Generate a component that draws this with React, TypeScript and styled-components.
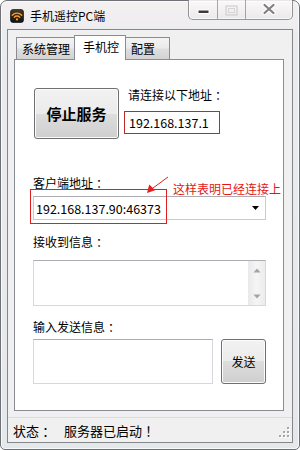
import React from "react";
import styled, { createGlobalStyle } from "styled-components";

const GlobalStyle = createGlobalStyle`
  html, body {
    margin: 0;
    padding: 0;
    width: 300px;
    height: 450px;
    overflow: hidden;
    background: #ffffff;
  }
  body {
    font-family: "Noto Sans CJK SC", "Noto Sans", sans-serif;
    color: #000;
  }
  * {
    box-sizing: border-box;
  }
`;

function App() {
  return (
    <>
      <GlobalStyle />
      <Window>
        <TitleBar>
          <AppIcon width="14" height="14" viewBox="0 0 14 14">
            <defs>
              <linearGradient id="iconBg" x1="0" y1="0" x2="0" y2="1">
                <stop offset="0" stopColor="#4b3a26" />
                <stop offset="1" stopColor="#121212" />
              </linearGradient>
            </defs>
            <rect x="0.5" y="0.5" width="13" height="13" rx="2.5" fill="url(#iconBg)" stroke="#000" strokeWidth="0.6" />
            <path d="M2.3 6.2 A6.4 6.4 0 0 1 11.7 6.2" stroke="#ff9b21" strokeWidth="1.4" fill="none" strokeLinecap="round" />
            <path d="M4.3 8.2 A3.6 3.6 0 0 1 9.7 8.2" stroke="#ff9b21" strokeWidth="1.4" fill="none" strokeLinecap="round" />
            <circle cx="7" cy="10.4" r="1.1" fill="#ff9b21" />
          </AppIcon>
          <Title>手机遥控PC端</Title>
          <CaptionGroup>
            <CaptionButton $w={28}>
              <Glyph width="13" height="6" viewBox="0 0 13 6" $top={4}>
                <rect x="1" y="1" width="11" height="3.5" fill="#3a3a3a" stroke="#fff" strokeWidth="1" />
              </Glyph>
            </CaptionButton>
            <CaptionButton $w={28}>
              <Glyph width="13" height="11" viewBox="0 0 13 11" $top={1}>
                <rect x="1" y="1" width="11" height="9" fill="none" stroke="#c9c9c9" strokeWidth="1" />
                <rect x="3.5" y="3.5" width="6" height="4" fill="none" stroke="#d5d5d5" strokeWidth="1" />
              </Glyph>
            </CaptionButton>
            <CaptionButton $w={47}>
              <Glyph width="14" height="12" viewBox="0 0 14 12" $top={-1}>
                <path d="M2.5 2 L11.5 10 M11.5 2 L2.5 10" stroke="#ffffff" strokeWidth="4.2" strokeLinecap="round" />
                <path d="M2.5 2 L11.5 10 M11.5 2 L2.5 10" stroke="#7f7f7f" strokeWidth="2.2" strokeLinecap="round" />
              </Glyph>
            </CaptionButton>
          </CaptionGroup>
        </TitleBar>

        <Client>
          <TabArea>
            <TabStrip>
              <Tab $w={59}>系统管理</Tab>
              <Tab $w={52} $active>
                手机控
              </Tab>
              <Tab $w={45}>配置</Tab>
            </TabStrip>

            <Panel>
              <TopRow>
                <Button $w={85} $h={51} $size={15} $bold>
                  停止服务
                </Button>
                <AddressColumn>
                  <Label $indent={4}>
                    请连接以下地址<Colon>：</Colon>
                  </Label>
                  <IpBox>192.168.137.1</IpBox>
                </AddressColumn>
              </TopRow>

              <Label $top={37}>
                客户端地址<Colon>：</Colon>
              </Label>
              <Combo>
                <ComboText>192.168.137.90:46373</ComboText>
                <svg width="8" height="5" viewBox="0 0 8 5">
                  <path d="M0 0 H7 L3.5 4 Z" fill="#000" />
                </svg>
              </Combo>

              <Label $top={15}>
                接收到信息<Colon>：</Colon>
              </Label>
              <MessageBox>
                <MessageText />
                <ScrollBar>
                  <svg width="8" height="5" viewBox="0 0 8 5">
                    <path d="M0.5 4.5 H7.5 L4 0.5 Z" fill="#a3a3a3" />
                  </svg>
                  <svg width="8" height="5" viewBox="0 0 8 5">
                    <path d="M0.5 0.5 H7.5 L4 4.5 Z" fill="#a3a3a3" />
                  </svg>
                </ScrollBar>
              </MessageBox>

              <Label $top={14}>
                输入发送信息<Colon>：</Colon>
              </Label>
              <SendRow>
                <SendInput />
                <Button $w={45} $h={45} $size={12}>
                  发送
                </Button>
              </SendRow>

              <NoteFrame />
              <NoteArrow width="32" height="26" viewBox="0 0 32 26">
                <path d="M28 5 L11 17.5" stroke="#e3201f" strokeWidth="1" fill="none" />
                <path d="M7 21 L9.2 12.6 L15.2 18.2 Z" fill="#e3201f" />
              </NoteArrow>
              <NoteText>这样表明已经连接上</NoteText>
            </Panel>
          </TabArea>

          <StatusBar>
            <span>
              状态<Colon>：</Colon>
            </span>
            <StatusValue>
              服务器已启动<Colon>！</Colon>
            </StatusValue>
            <Grip width="12" height="12" viewBox="0 0 12 12">
              {[
                [8, 0],
                [4, 4],
                [8, 4],
                [0, 8],
                [4, 8],
                [8, 8],
              ].map(([x, y]) => (
                <g key={`${x}-${y}`}>
                  <rect x={x + 1} y={y + 1} width="2" height="2" fill="#ffffff" />
                  <rect x={x} y={y} width="2" height="2" fill="#a7a7a7" />
                </g>
              ))}
            </Grip>
          </StatusBar>
        </Client>
      </Window>
    </>
  );
}

export default App;

const Window = styled.div`
  width: 300px;
  height: 450px;
  display: flex;
  flex-direction: column;
  padding: 0 6px 6px;
  border: 1px solid #6e7276;
  border-radius: 7px 7px 5px 5px;
  background: linear-gradient(180deg, #f4f0f1 0%, #eaebee 40px, #e5e8eb 100%);
  box-shadow: inset 0 0 0 1px rgba(255, 255, 255, 0.75);
`;

const TitleBar = styled.div`
  height: 28px;
  flex-shrink: 0;
  display: flex;
  align-items: flex-start;
`;

const AppIcon = styled.svg`
  flex-shrink: 0;
  margin: 8px 6px 0 3px;
`;

const Title = styled.div`
  margin-top: 7px;
  font-size: 12px;
  line-height: 16px;
  color: #000;
`;

const CaptionGroup = styled.div`
  margin-left: auto;
  margin-top: -1px;
  height: 20px;
  display: flex;
  border: 1px solid rgba(70, 70, 70, 0.55);
  border-top: none;
  border-radius: 0 0 5px 5px;
  overflow: hidden;
  background: linear-gradient(180deg, rgba(255, 255, 255, 0.6), rgba(228, 228, 228, 0.4));
  box-shadow: inset 0 0 0 1px rgba(255, 255, 255, 0.6);
`;

const CaptionButton = styled.div<{ $w: number }>`
  width: ${(p) => p.$w}px;
  display: flex;
  align-items: center;
  justify-content: center;

  & + & {
    border-left: 1px solid rgba(70, 70, 70, 0.45);
  }
`;

const Glyph = styled.svg<{ $top: number }>`
  margin-top: ${(p) => p.$top}px;
`;

const Client = styled.div`
  flex: 1;
  display: flex;
  flex-direction: column;
  border: 1px solid #83878c;
  background: #f0f0f0;
`;

const TabArea = styled.div`
  flex: 1;
  display: flex;
  flex-direction: column;
  padding: 5px 8px 6px 6px;
`;

const TabStrip = styled.div`
  height: 24px;
  display: flex;
  align-items: flex-end;
  padding-left: 2px;
`;

const Tab = styled.div<{ $w: number; $active?: boolean }>`
  position: relative;
  z-index: ${(p) => (p.$active ? 2 : 1)};
  width: ${(p) => p.$w}px;
  height: ${(p) => (p.$active ? 25 : 22)}px;
  margin-bottom: ${(p) => (p.$active ? -1 : 0)}px;
  display: flex;
  align-items: center;
  padding: 0 0 ${(p) => (p.$active ? 4 : 0)}px ${(p) => (p.$active ? 8 : 5)}px;
  border: 1px solid #898c95;
  border-bottom: none;
  font-size: 12px;
  white-space: nowrap;
  background: ${(p) =>
    p.$active
      ? "#ffffff"
      : "linear-gradient(180deg, #f3f3f3 0%, #ebebeb 45%, #dedede 55%, #d3d3d3 100%)"};

  & + & {
    margin-left: -1px;
  }
`;

const Panel = styled.div`
  flex: 1;
  position: relative;
  display: flex;
  flex-direction: column;
  padding: 28px 17px 0 18px;
  border: 1px solid #898c95;
  background: #ffffff;
`;

const TopRow = styled.div`
  display: flex;
  align-items: flex-start;
  gap: 5px;
  margin-left: 1px;
`;

const Button = styled.button<{ $w: number; $h: number; $size: number; $bold?: boolean }>`
  width: ${(p) => p.$w}px;
  height: ${(p) => p.$h}px;
  flex-shrink: 0;
  padding: 0;
  border: 1px solid #707070;
  border-radius: 3px;
  background: linear-gradient(180deg, #f2f2f2 0%, #ebebeb 50%, #dddddd 50%, #cfcfcf 100%);
  box-shadow: inset 0 0 0 1px #fbfbfb;
  font-family: inherit;
  font-size: ${(p) => p.$size}px;
  font-weight: ${(p) => (p.$bold ? 700 : 400)};
  color: #000;
`;

const AddressColumn = styled.div`
  display: flex;
  flex-direction: column;
`;

const Label = styled.div<{ $indent?: number; $top?: number }>`
  margin-top: ${(p) => p.$top ?? 0}px;
  padding-left: ${(p) => p.$indent ?? 0}px;
  font-size: 12px;
  line-height: 14px;
  white-space: nowrap;
`;

/* full-width punctuation drawn centred in its cell, as on the reference */
const Colon = styled.span`
  display: inline-block;
  width: 1em;
  text-align: center;
  text-indent: 0.25em;
`;

const IpBox = styled.div`
  width: 96px;
  height: 23px;
  margin-top: 9px;
  display: flex;
  align-items: center;
  padding-left: 4px;
  border: 1px solid #c1272d;
  font-size: 12.5px;
`;

const Combo = styled.div`
  height: 24px;
  margin-top: 6px;
  display: flex;
  align-items: center;
  padding: 0 5px 0 2px;
  border: 1px solid #c9cbd0;
  border-top-color: #abadb3;
  background: #ffffff;
`;

const ComboText = styled.div`
  flex: 1;
  font-size: 12.5px;
`;

const MessageBox = styled.div`
  height: 46px;
  margin-top: 11px;
  display: flex;
  border: 1px solid #d5d8de;
  border-top-color: #abadb3;
  background: #ffffff;
`;

const MessageText = styled.div`
  flex: 1;
`;

const ScrollBar = styled.div`
  width: 17px;
  display: flex;
  flex-direction: column;
  align-items: center;
  justify-content: space-between;
  padding: 7px 0 6px;
  background: linear-gradient(90deg, #e9e9e9 0%, #f5f5f5 50%, #ececec 100%);
`;

const SendRow = styled.div`
  height: 45px;
  margin-top: 5px;
  display: flex;
  gap: 8px;
`;

const SendInput = styled.div`
  flex: 1;
  border: 1px solid #d5d8de;
  border-top-color: #abadb3;
  background: #ffffff;
`;

const NoteFrame = styled.div`
  position: absolute;
  left: 15px;
  top: 129px;
  width: 137px;
  height: 35px;
  border: 1.5px solid #e0201f;
`;

const NoteArrow = styled.svg`
  position: absolute;
  left: 125px;
  top: 112px;
`;

const NoteText = styled.div`
  position: absolute;
  left: 158px;
  top: 121px;
  font-size: 12px;
  line-height: 16px;
  color: #e81414;
  white-space: nowrap;
`;

const StatusBar = styled.div`
  height: 25px;
  flex-shrink: 0;
  display: flex;
  align-items: center;
  padding: 0 1px 0 5px;
  border-top: 1px solid #dcdcdc;
  font-size: 13px;
`;

const StatusValue = styled.span`
  margin-left: 12px;
`;

const Grip = styled.svg`
  margin-left: auto;
  align-self: flex-end;
  margin-bottom: 3px;
`;
